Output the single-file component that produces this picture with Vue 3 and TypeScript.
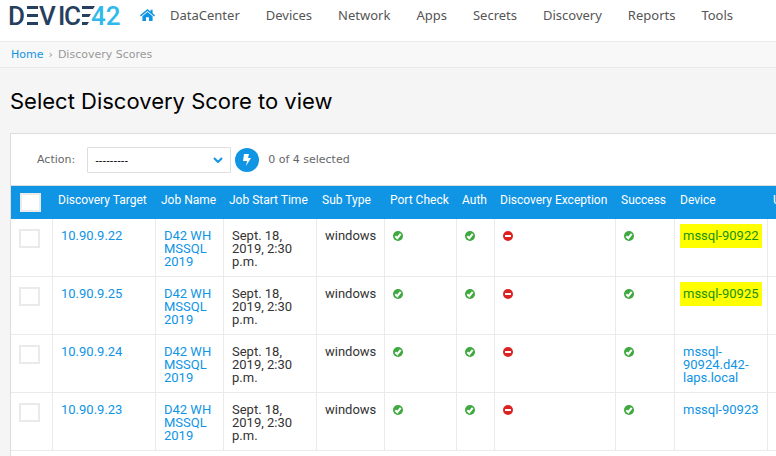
<script setup lang="ts">
interface Row {
  target: string
  device: string
  marked: boolean
}

const menu: string[] = ['DataCenter', 'Devices', 'Network', 'Apps', 'Secrets', 'Discovery', 'Reports', 'Tools']
const rows: Row[] = [
  { target: '10.90.9.22', device: 'mssql-90922', marked: true },
  { target: '10.90.9.25', device: 'mssql-90925', marked: true },
  { target: '10.90.9.24', device: 'mssql-90924.d42-laps.local', marked: false },
  { target: '10.90.9.23', device: 'mssql-90923', marked: false },
]
</script>

<template>
  <div class="page">
    <header class="topbar">
      <a href="#" class="logo" aria-label="Device42">
        <svg width="114" height="32" viewBox="-2 -4 114 32">
          <g class="dark">
            <text x="-2" y="21">D</text>
            <text x="29" y="21">V</text>
            <text x="48" y="21">I</text>
            <text x="54" y="21">C</text>
            <rect x="17" y="2" width="11" height="3" />
            <rect x="17" y="10" width="11" height="3" />
            <rect x="17" y="18" width="11" height="3" />
            <polygon points="72,2 85,2 83,5 72,5" />
            <polygon points="72,10 81,10 79,13 72,13" />
            <polygon points="72,18 79,18 77,21 72,21" />
          </g>
          <text class="light" x="81" y="21">42</text>
        </svg>
      </a>
      <nav class="menu">
        <a href="#" class="home" aria-label="Home">
          <svg width="15" height="13" viewBox="0 0 15 13">
            <path d="M0 6.3 7.5 0 10.6 2.6V.8h2v3.5L15 6.3l-.9 1.1-6.6-5.5L.9 7.4z" />
            <path d="M2.4 7.2 7.5 3l5.1 4.2V12H9V8.3H6V12H2.4z" />
          </svg>
        </a>
        <a v-for="item in menu" :key="item" href="#">{{ item }}</a>
      </nav>
    </header>
    <div class="crumbs"><a href="#">Home</a><span>›</span><span>Discovery Scores</span></div>
    <main>
      <h1>Select Discovery Score to view</h1>
      <section class="panel">
        <div class="actions">
          <label for="action">Action:</label>
          <div class="picker">
            <select id="action"><option>---------</option></select>
            <svg width="10" height="6" viewBox="0 0 10 6"><path d="M1 1l4 4 4-4" /></svg>
          </div>
          <button type="button" aria-label="Run">
            <svg width="10" height="14" viewBox="0 0 10 14"><path d="M2 1h5L6 5h3L4 13l1-5H1z" /></svg>
          </button>
          <span>0 of 4 selected</span>
        </div>
        <table>
          <colgroup>
            <col class="w-tick"><col class="w-target"><col class="w-job"><col class="w-time"><col class="w-type">
            <col class="w-port"><col class="w-auth"><col class="w-exception"><col class="w-success"><col class="w-device"><col class="w-user">
          </colgroup>
          <thead>
            <tr>
              <th><input type="checkbox" aria-label="Select all"></th>
              <th>Discovery Target</th>
              <th>Job Name</th>
              <th>Job Start Time</th>
              <th>Sub Type</th>
              <th>Port Check</th>
              <th>Auth</th>
              <th>Discovery Exception</th>
              <th>Success</th>
              <th>Device</th>
              <th>U</th>
            </tr>
          </thead>
          <tbody>
            <tr v-for="row in rows" :key="row.target">
              <td><input type="checkbox" :aria-label="row.target"></td>
              <td><a href="#">{{ row.target }}</a></td>
              <td><a href="#">D42 WH MSSQL 2019</a></td>
              <td>Sept. 18, 2019, 2:30 p.m.</td>
              <td>windows</td>
              <td v-for="n in 4" :key="n">
                <svg v-if="n !== 3" class="yes" width="10" height="10" viewBox="0 0 10 10">
                  <circle cx="5" cy="5" r="5" /><path d="M2.300 5.200l2 2 3.400-4.400" />
                </svg>
                <svg v-else class="no" width="10" height="10" viewBox="0 0 10 10">
                  <circle cx="5" cy="5" r="5" /><path d="M2 5h6" />
                </svg>
              </td>
              <td><a href="#" :class="{ marked: row.marked }">{{ row.device }}</a></td>
              <td></td>
            </tr>
          </tbody>
        </table>
      </section>
    </main>
  </div>
</template>

<style>
body {
  background: #f5f5f5;
}
</style>

<style scoped>
.page {
  display: flex;
  flex-direction: column;
  min-height: 100vh;
  overflow: hidden;
  font-family: Roboto, sans-serif;
  font-size: 13px;
  color: #333;
}
a {
  color: #1094e4;
  text-decoration: none;
}
svg {
  display: block;
}
.topbar {
  display: flex;
  align-items: flex-start;
  height: 42px;
  box-sizing: border-box;
  padding: 0 8px;
  background: #fff;
  border-bottom: 1px solid #eaeaea;
}
.logo text {
  font: 500 26px Roboto, sans-serif;
}
.dark {
  fill: #263f5e;
}
.light {
  fill: #2fb9ec;
}
.menu {
  display: flex;
  align-items: center;
  gap: 26px;
  margin-left: 18px;
  padding-top: 5px;
  font-family: "Noto Sans", sans-serif;
  font-size: 13px;
  line-height: 20px;
}
.menu a {
  color: #555;
}
.menu .home {
  margin-right: -11px;
}
.home svg {
  fill: #1094e4;
}
.crumbs {
  display: flex;
  gap: 5px;
  padding: 5px 11px 4px;
  font: 11px/16px "DejaVu Sans", sans-serif;
  color: #999;
  background: #f8f8f8;
  border-bottom: 1px solid #eaeaea;
}
main {
  display: flex;
  flex-direction: column;
  flex: 1;
  padding: 20px 0 0 10px;
}
h1 {
  margin: 0 0 19px;
  font: 400 22px/26px Inter, sans-serif;
  color: #000;
}
.panel {
  flex: 1;
  background: #fff;
  border: 1px solid #ddd;
  border-right: 0;
  border-bottom: 0;
}
.actions {
  display: flex;
  align-items: center;
  padding: 13px 26px 12px;
  border-bottom: 1px solid #ddd;
  font: 11px/16px "DejaVu Sans", sans-serif;
  color: #666;
}
.picker {
  display: grid;
  align-items: center;
  margin: 0 4px 0 12px;
}
.picker > * {
  grid-area: 1 / 1;
}
.picker svg {
  justify-self: end;
  margin-right: 8px;
  fill: none;
  stroke: #1094e4;
  stroke-width: 2;
  pointer-events: none;
}
select {
  appearance: none;
  width: 144px;
  height: 26px;
  padding: 0 7px;
  border: 1px solid #ddd;
  border-radius: 1px;
  background: #fff;
  color: #000;
  font: 11px "Liberation Sans", sans-serif;
}
button {
  display: grid;
  place-items: center;
  width: 24px;
  height: 24px;
  margin-right: 9px;
  padding: 0;
  border: 0;
  border-radius: 50%;
  background: #1094e4;
}
button svg {
  fill: #fff;
}
table {
  table-layout: fixed;
  width: 100%;
  min-width: 860px;
  border-collapse: separate;
  border-spacing: 0;
  line-height: 13px;
}
.w-tick { width: 42px; }
.w-target { width: 103px; }
.w-job { width: 68px; }
.w-time { width: 93px; }
.w-type { width: 68px; }
.w-port { width: 72px; }
.w-auth { width: 38px; }
.w-exception { width: 121px; }
.w-success { width: 59px; }
.w-device { width: 93px; }
th {
  height: 33px;
  box-sizing: border-box;
  padding: 8px 5px 4px;
  background: #1094e4;
  color: #fff;
  font-size: 12px;
  font-weight: 400;
  text-align: left;
  vertical-align: top;
  white-space: nowrap;
}
td {
  height: 58px;
  box-sizing: border-box;
  padding: 10px 8px 6px;
  border-right: 1px solid #eaeaea;
  border-bottom: 1px solid #eaeaea;
  vertical-align: top;
}
th:first-child {
  padding: 7px 9px;
}
td svg {
  margin-top: 2px;
}
input {
  appearance: none;
  display: block;
  width: 21px;
  height: 19px;
  margin: 0;
  border: 2px solid #eaeaea;
  background: #fff;
}
.yes {
  fill: #3fa83f;
}
.no {
  fill: #dd2222;
}
.yes path {
  fill: none;
  stroke: #fff;
  stroke-width: 2;
}
.no path {
  stroke: #fff;
  stroke-width: 2;
}
.marked {
  display: block;
  margin: -5px -3px;
  padding: 5px 3px 6px;
  background: #ff0;
  color: #179110;
}
</style>
